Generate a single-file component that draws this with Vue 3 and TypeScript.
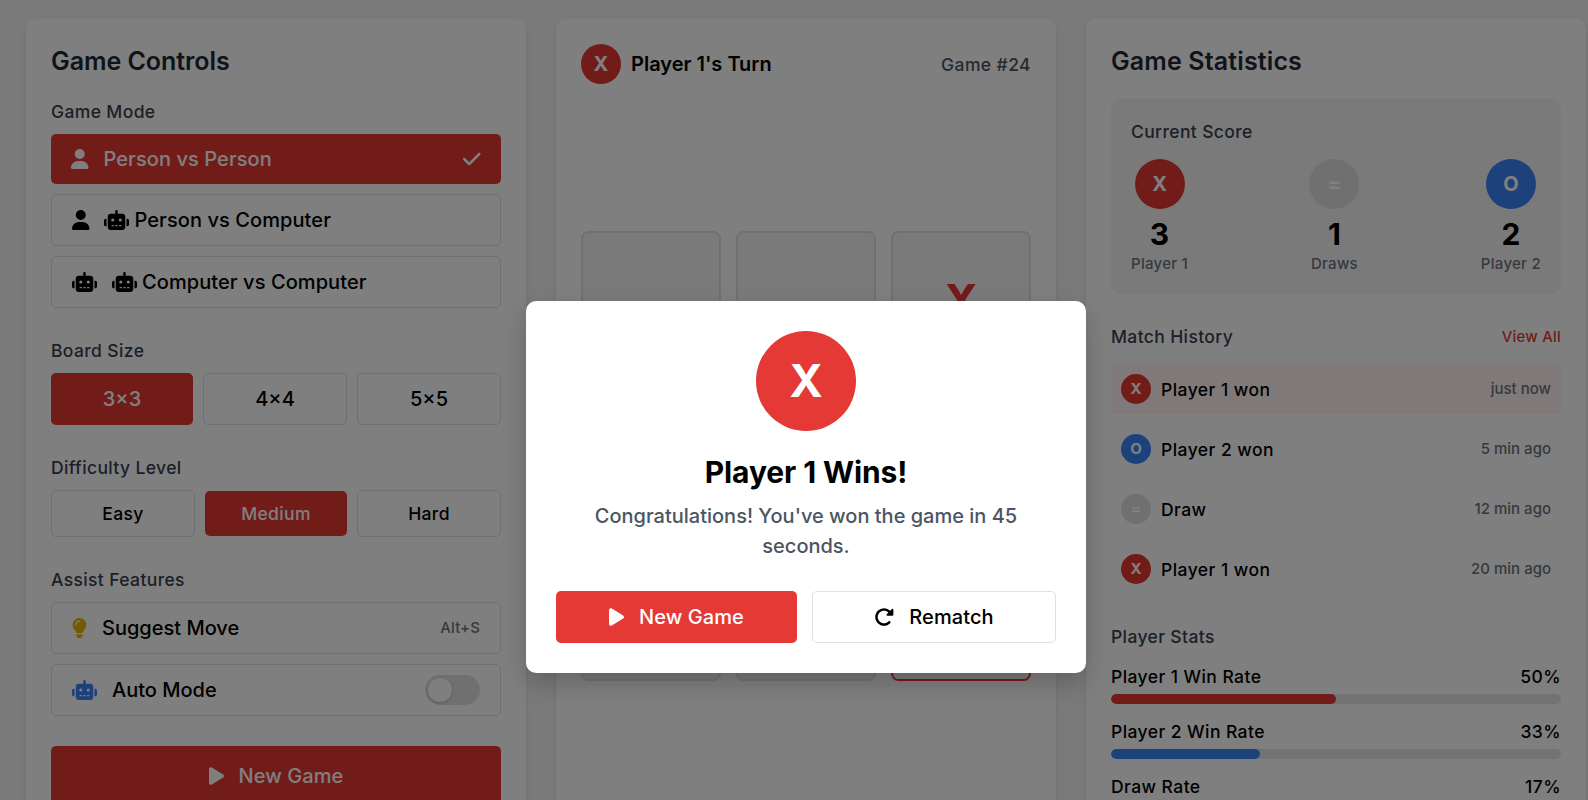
<script setup lang="ts">
import { h } from 'vue'
import type { FunctionalComponent } from 'vue'

interface Glyph { w: number; d: string }

const glyphs: Record<string, Glyph> = {
  user: { w: 448, d: 'M224 256A128 128 0 1 0 224 0a128 128 0 1 0 0 256zm-45.7 48C79.8 304 0 383.8 0 482.3C0 498.7 13.3 512 29.7 512H418.3c16.4 0 29.7-13.3 29.7-29.7C448 383.8 368.2 304 269.7 304H178.3z' },
  robot: { w: 640, d: 'M320 0c17.7 0 32 14.3 32 32V96H472c39.8 0 72 32.2 72 72V440c0 39.8-32.2 72-72 72H168c-39.8 0-72-32.2-72-72V168c0-39.8 32.2-72 72-72H288V32c0-17.7 14.3-32 32-32zM208 384c-8.8 0-16 7.2-16 16s7.2 16 16 16h32c8.8 0 16-7.2 16-16s-7.2-16-16-16H208zm96 0c-8.8 0-16 7.2-16 16s7.2 16 16 16h32c8.8 0 16-7.2 16-16s-7.2-16-16-16H304zm96 0c-8.8 0-16 7.2-16 16s7.2 16 16 16h32c8.8 0 16-7.2 16-16s-7.2-16-16-16H400zM264 256a40 40 0 1 0 -80 0 40 40 0 1 0 80 0zm152 40a40 40 0 1 0 0-80 40 40 0 1 0 0 80zM48 224H64V416H48c-26.5 0-48-21.5-48-48V272c0-26.5 21.5-48 48-48zm544 0c26.5 0 48 21.5 48 48v96c0 26.5-21.5 48-48 48H576V224h16z' },
  check: { w: 448, d: 'M438.6 105.4c12.5 12.5 12.5 32.8 0 45.3l-256 256c-12.5 12.5-32.8 12.5-45.3 0l-128-128c-12.5-12.5-12.5-32.8 0-45.3s32.8-12.5 45.3 0L160 338.7 393.4 105.4c12.5-12.5 32.8-12.5 45.3 0z' },
  bulb: { w: 384, d: 'M272 384c9.6-31.9 29.5-59.1 49.2-86.2l0 0c5.2-7.1 10.4-14.2 15.4-21.4c19.8-28.5 31.4-63 31.4-100.3C368 78.8 289.2 0 192 0S16 78.8 16 176c0 37.3 11.6 71.9 31.4 100.3c5 7.2 10.2 14.3 15.4 21.4l0 0c19.8 27.1 39.7 54.4 49.2 86.2H272zM192 512c44.2 0 80-35.8 80-80V416H112v16c0 44.2 35.8 80 80 80zM112 176c0 8.8-7.2 16-16 16s-16-7.2-16-16c0-61.9 50.1-112 112-112c8.8 0 16 7.2 16 16s-7.2 16-16 16c-44.2 0-80 35.8-80 80z' },
  play: { w: 384, d: 'M73 39c-14.8-9.1-33.4-9.4-48.5-.9S0 62.6 0 80V432c0 17.4 9.4 33.4 24.5 41.9s33.7 8.1 48.5-.9L361 297c14.3-8.7 23-24.2 23-41s-8.7-32.2-23-41L73 39z' },
  redo: { w: 512, d: 'M463.5 224H472c13.3 0 24-10.7 24-24V72c0-9.7-5.8-18.5-14.8-22.2s-19.3-1.7-26.2 5.2L413.4 96.6c-87.6-86.5-228.7-86.2-315.8 1c-87.5 87.5-87.5 229.3 0 316.8s229.3 87.5 316.8 0c12.5-12.5 12.5-32.8 0-45.3s-32.8-12.5-45.3 0c-62.5 62.5-163.8 62.5-226.3 0s-62.5-163.8 0-226.3c62.2-62.2 162.7-62.5 225.3-1L327 183c-6.9 6.9-8.9 17.2-5.2 26.2s12.5 14.8 22.2 14.8H463.5z' },
}

const Icon: FunctionalComponent<{ name: string }> = (props) => {
  const g = glyphs[props.name]
  return h('svg', { viewBox: `0 0 ${g.w} 512`, width: (g.w / 512) * 20, height: 20, fill: 'currentColor', 'aria-hidden': 'true' }, [h('path', { d: g.d })])
}
Icon.props = ['name']

const modes = [
  { icon: 'user', second: '', label: 'Person vs Person', active: true },
  { icon: 'user', second: 'robot', label: 'Person vs Computer', active: false },
  { icon: 'robot', second: 'robot', label: 'Computer vs Computer', active: false },
]
const sizes = ['3×3', '4×4', '5×5']
const levels = ['Easy', 'Medium', 'Hard']
const cells = ['', '', 'X', '', '', '', '', '', '']
const scores = [
  { mark: 'X', kind: 'x', value: 3, label: 'Player 1' },
  { mark: '=', kind: 'draw', value: 1, label: 'Draws' },
  { mark: 'O', kind: 'o', value: 2, label: 'Player 2' },
]
const history = [
  { mark: 'X', kind: 'x', text: 'Player 1 won', time: 'just now' },
  { mark: 'O', kind: 'o', text: 'Player 2 won', time: '5 min ago' },
  { mark: '=', kind: 'draw', text: 'Draw', time: '12 min ago' },
  { mark: 'X', kind: 'x', text: 'Player 1 won', time: '20 min ago' },
]
const rates = [
  { label: 'Player 1 Win Rate', value: 50, kind: 'x' },
  { label: 'Player 2 Win Rate', value: 33, kind: 'o' },
  { label: 'Draw Rate', value: 17, kind: 'draw' },
]
</script>

<template>
  <div class="screen">
    <main class="columns">
      <section class="card">
        <h2>Game Controls</h2>

        <div class="group">
          <h3>Game Mode</h3>
          <div class="stack">
            <button v-for="m in modes" :key="m.label" class="option" :class="{ active: m.active }">
              <Icon :name="m.icon" class="lead" />
              <span class="option-label"><Icon v-if="m.second" :name="m.second" class="inline-icon" />{{ m.label }}</span>
              <Icon v-if="m.active" name="check" class="trail tick" />
            </button>
          </div>
        </div>

        <div class="group">
          <h3>Board Size</h3>
          <div class="segments">
            <button v-for="(s, i) in sizes" :key="s" class="segment" :class="{ active: i === 0 }">{{ s }}</button>
          </div>
        </div>

        <div class="group">
          <h3>Difficulty Level</h3>
          <div class="segments levels">
            <button v-for="l in levels" :key="l" class="segment" :class="{ active: l === 'Medium' }">{{ l }}</button>
          </div>
        </div>

        <div class="group">
          <h3>Assist Features</h3>
          <div class="stack">
            <button class="option assist">
              <Icon name="bulb" class="lead yellow" />
              <span class="option-label">Suggest Move</span>
              <span class="hint trail">Alt+S</span>
            </button>
            <div class="option assist">
              <Icon name="robot" class="lead blue" />
              <span class="option-label">Auto Mode</span>
              <span class="toggle trail"><span class="knob"></span></span>
            </div>
          </div>
        </div>

        <button class="primary start"><Icon name="play" class="lead" />New Game</button>
      </section>

      <section class="card board-card">
        <header class="turn">
          <span class="disc x medium">X</span>
          <span class="turn-name">Player 1's Turn</span>
          <span class="game-no">Game #24</span>
        </header>
        <div class="board">
          <div v-for="(c, i) in cells" :key="i" class="cell" :class="{ last: i === 8 }">{{ c }}</div>
        </div>
      </section>

      <section class="card">
        <h2 class="stats-heading">Game Statistics</h2>
        <div class="score-box">
          <h3>Current Score</h3>
          <div class="scores">
            <div v-for="s in scores" :key="s.label" class="score">
              <span class="disc large" :class="s.kind">{{ s.mark }}</span>
              <span class="score-value">{{ s.value }}</span>
              <span class="score-label">{{ s.label }}</span>
            </div>
          </div>
        </div>

        <div class="group">
          <div class="history-head">
            <h3>Match History</h3>
            <a class="view-all">View All</a>
          </div>
          <div class="stack">
            <div v-for="(r, i) in history" :key="i" class="match" :class="{ latest: i === 0 }">
              <span class="disc small" :class="r.kind">{{ r.mark }}</span>
              <span class="result">{{ r.text }}</span>
              <span class="time trail">{{ r.time }}</span>
            </div>
          </div>
        </div>

        <h3 class="stats-title">Player Stats</h3>
        <div class="rates">
          <div v-for="r in rates" :key="r.label" class="rate">
            <div class="rate-head"><span>{{ r.label }}</span><span>{{ r.value }}%</span></div>
            <div class="track"><div class="fill" :class="r.kind" :style="{ width: r.value + '%' }"></div></div>
          </div>
        </div>
      </section>
    </main>

    <div class="overlay">
      <div class="modal">
        <span class="disc x huge">X</span>
        <h1>Player 1 Wins!</h1>
        <p>Congratulations! You've won the game in 45 seconds.</p>
        <div class="actions">
          <button class="primary"><Icon name="play" class="lead" />New Game</button>
          <button class="secondary"><Icon name="redo" class="lead" />Rematch</button>
        </div>
      </div>
    </div>
  </div>
</template>

<style>
html, body { margin: 0; overflow: hidden; }
</style>

<style scoped>
* { box-sizing: border-box; }
.screen {
  position: relative;
  height: 800px;
  overflow: hidden;
  background: #f5f5f5;
  color: #000;
  font: 400 20px/30px Inter, "Liberation Sans", sans-serif;
}
h1, h2, h3, p { margin: 0; }
svg { display: block; flex: none; }
button { margin: 0; border: 0; background: none; color: inherit; font: inherit; }
.columns {
  display: grid;
  grid-template-columns: repeat(3, 500px);
  gap: 30px;
  width: 1612px;
  padding: 19px 26px 0;
}
.card {
  display: flex;
  flex-direction: column;
  min-height: 850px;
  padding: 25px;
  border-radius: 10px;
  background: #fff;
  box-shadow: 0 4px 6px rgba(0, 0, 0, 0.1);
}
h2 { margin-bottom: 20px; color: #1f2937; font-size: 25px; font-weight: 600; line-height: 35px; letter-spacing: -0.05px; }
.stats-heading { letter-spacing: 0.13px; }
h3 { margin-bottom: 10px; color: #374151; font-size: 17.5px; font-weight: 500; line-height: 25px; letter-spacing: 0.37px; }
.group { margin-bottom: 30px; }
.stack { display: flex; flex-direction: column; gap: 10px; }
.option {
  display: flex;
  align-items: center;
  padding: 10px 20px;
  border: 1px solid #e0e0e0;
  border-radius: 5px;
  font-weight: 500;
  letter-spacing: 0.08px;
}
.option-label { display: flex; align-items: center; }
.assist { letter-spacing: 0; }
.lead { margin-right: 15px; }
.option .inline-icon { margin: 0 5.5px 0 -0.5px; }
.trail { margin-left: auto; }
.tick { margin-right: 0.5px; }
.active { border: 0; background: #e53935; color: #fff; }
.yellow { color: #eab308; }
.blue { color: #3b82f6; }
.hint { color: #6b7280; font-size: 15px; line-height: 20px; font-weight: 500; letter-spacing: 0.1px; }
.toggle { display: flex; align-items: center; width: 55px; height: 30px; padding: 0 3px; border-radius: 15px; background: #e0e0e0; }
.knob { width: 24px; height: 24px; border-radius: 50%; background: #fff; box-shadow: 0 1px 3px rgba(0, 0, 0, 0.2); }
.segments { display: flex; gap: 10px; }
.segment { flex: 1 1 0; padding: 10px 0; border: 1px solid #e0e0e0; border-radius: 5px; font-weight: 500; }
.segment.active { border: 0; }
.levels { align-items: center; }
.levels .segment { font-size: 17.5px; line-height: 25px; letter-spacing: 0.35px; }
.primary, .secondary { display: flex; align-items: center; justify-content: center; padding: 10px 0; border-radius: 5px; font-weight: 500; letter-spacing: 0.08px; }
.primary { background: #e53935; color: #fff; }
.secondary { border: 1px solid #e0e0e0; }
.start { padding: 15px 0; }

.disc { display: flex; flex: none; align-items: center; justify-content: center; border-radius: 50%; color: #fff; font-weight: 700; }
.x { background: #e53935; }
.o { background: #3b82f6; }
.draw { background: #e0e0e0; }
.small { width: 30px; height: 30px; margin-right: 10px; font-size: 15px; }
.medium { width: 40px; height: 40px; margin-right: 10px; }
.large { width: 50px; height: 50px; margin-bottom: 5px; }
.huge { width: 100px; height: 100px; margin-bottom: 20px; font-size: 45px; line-height: 50px; }

.turn { display: flex; align-items: center; }
.turn-name { font-weight: 600; }
.game-no { margin-left: auto; color: #4b5563; font-size: 17.5px; font-weight: 500; line-height: 25px; letter-spacing: 0.4px; }
.board { display: grid; grid-template-columns: repeat(3, 140px); grid-auto-rows: 140px; gap: 15px; margin-top: 147px; }
.cell {
  display: flex;
  align-items: center;
  justify-content: center;
  border: 2px solid #e0e0e0;
  border-radius: 7.5px;
  background: #f5f5f5;
  color: #e53935;
  font-size: 45px;
  font-weight: 700;
}
.cell.last { border-color: #e53935; }

.score-box { margin-bottom: 30px; padding: 20px; border-radius: 10px; background: #f5f5f5; }
.score-box h3 { margin-bottom: 15px; }
.scores { display: flex; justify-content: space-between; }
.score { display: flex; flex-direction: column; align-items: center; }
.score-value { font-size: 30px; font-weight: 700; line-height: 40px; }
.score-label { color: #6b7280; font-size: 15px; font-weight: 500; line-height: 20px; letter-spacing: 0.28px; }
.history-head { display: flex; align-items: center; justify-content: space-between; margin-bottom: 15px; }
.history-head h3 { margin: 0; }
.view-all { color: #e53935; font-size: 15px; font-weight: 500; line-height: 20px; letter-spacing: 0.22px; }
.match { display: flex; align-items: center; height: 50px; padding: 0 10px; border-radius: 5px; font-size: 17.5px; font-weight: 500; }
.result { padding-top: 1px; letter-spacing: 0.45px; }
.latest { background: #fef2f2; }
.time { color: #6b7280; font-size: 15px; }
.stats-title { margin-bottom: 15px; }
.rates { display: flex; flex-direction: column; gap: 15px; }
.rate-head { display: flex; justify-content: space-between; margin-bottom: 5px; font-size: 17.5px; font-weight: 500; line-height: 25px; letter-spacing: 0.43px; }
.track { height: 10px; overflow: hidden; border-radius: 5px; background: #e5e7eb; }
.fill { height: 10px; border-radius: 5px; }

.overlay {
  position: absolute;
  top: 0;
  left: 0;
  display: flex;
  align-items: center;
  justify-content: center;
  width: 1612px;
  height: 974px;
  background: rgba(0, 0, 0, 0.5);
}
.modal {
  display: flex;
  flex-direction: column;
  align-items: center;
  width: 560px;
  padding: 30px;
  border-radius: 10px;
  background: #fff;
  box-shadow: 0 10px 25px rgba(0, 0, 0, 0.2);
  text-align: center;
}
h1 { padding-top: 1px; margin-bottom: 9px; font-size: 30px; font-weight: 700; line-height: 40px; letter-spacing: -0.12px; }
.modal p { margin-bottom: 30px; color: #4b5563; font-weight: 500; }
.actions { display: flex; gap: 15px; width: 100%; }
.actions .primary { flex: 0 0 241px; }
.actions .secondary { flex: 1 1 0; }
</style>
